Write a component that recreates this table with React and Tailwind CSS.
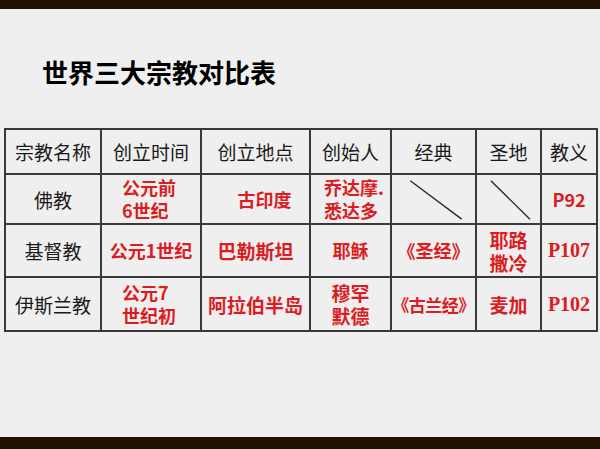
import React from 'react';

const red = 'text-[#dc1c22] font-bold';

function Slash() {
  return (
    <svg className="absolute inset-0 w-full h-full" viewBox="0 0 100 100" preserveAspectRatio="none">
      <line x1="22" y1="12" x2="84" y2="92" stroke="#2a2a2a" strokeWidth="1.4" vectorEffect="non-scaling-stroke" />
    </svg>
  );
}

export default function App() {
  const cell = 'border-2 border-[#3a3a3a] text-center align-middle leading-[23px] p-0 whitespace-nowrap';
  const serif = { fontFamily: '"Liberation Serif", "Noto Sans CJK SC", serif' };
  return (
    <div
      className="w-[600px] h-[449px] bg-[#efefef] flex flex-col overflow-hidden"
      style={{ fontFamily: '"Noto Sans CJK SC", "Noto Sans", sans-serif' }}
    >
      <div className="h-[9px] bg-[#221000] shrink-0" />
      <div className="flex-1 flex flex-col">
        <h1 className="pl-[42px] pt-[44px] text-[26px] leading-[38px] font-bold text-black">
          世界三大宗教对比表
        </h1>
        <div className="pl-[4px] pt-[37px]">
          <table className="border-collapse text-[19px] text-[#1a1a1a] table-fixed w-[592px]">
            <colgroup>
              <col className="w-[96px]" />
              <col className="w-[100px]" />
              <col className="w-[109px]" />
              <col className="w-[81px]" />
              <col className="w-[85px]" />
              <col className="w-[65px]" />
              <col className="w-[56px]" />
            </colgroup>
            <tbody>
              <tr className="h-[45px]">
                <td className={cell}>宗教名称</td>
                <td className={cell}>创立时间</td>
                <td className={cell}>创立地点</td>
                <td className={cell}>创始人</td>
                <td className={cell}>经典</td>
                <td className={cell}>圣地</td>
                <td className={cell}>教义</td>
              </tr>
              <tr className="h-[50px]">
                <td className={cell}>佛教</td>
                <td className={`${cell} ${red} text-[18px]`}>
                  <div className="text-left pl-[20px]">公元前<br />6世纪</div>
                </td>
                <td className={`${cell} ${red} text-[18px]`}><span className="pl-[18px]">古印度</span></td>
                <td className={`${cell} ${red} text-[18px]`}>
                  <div className="text-left pl-[13px]">乔达摩.<br />悉达多</div>
                </td>
                <td className={`${cell} relative`}><Slash /></td>
                <td className={`${cell} relative`}><Slash /></td>
                <td className={`${cell} ${red} text-[18px]`}>P92</td>
              </tr>
              <tr className="h-[53px]">
                <td className={cell}>基督教</td>
                <td className={`${cell} ${red} text-[18px]`}>公元1世纪</td>
                <td className={`${cell} ${red}`}>巴勒斯坦</td>
                <td className={`${cell} ${red} text-[18px]`}>耶稣</td>
                <td className={`${cell} ${red} text-[18px]`}>《圣经》</td>
                <td className={`${cell} ${red}`}>耶路<br />撒冷</td>
                <td className={`${cell} ${red} text-[20px]`} style={serif}>P107</td>
              </tr>
              <tr className="h-[54px]">
                <td className={cell}>伊斯兰教</td>
                <td className={`${cell} ${red} text-[18px]`}>
                  <div className="text-left pl-[20px]">公元7<br />世纪初</div>
                </td>
                <td className={`${cell} ${red}`}>阿拉伯半岛</td>
                <td className={`${cell} ${red}`}>穆罕<br />默德</td>
                <td className={`${cell} ${red} text-[17px] tracking-[-0.5px]`}>《古兰经》</td>
                <td className={`${cell} ${red}`}>麦加</td>
                <td className={`${cell} ${red} text-[20px]`} style={serif}>P102</td>
              </tr>
            </tbody>
          </table>
        </div>
      </div>
      <div className="h-[12px] bg-[#221000] shrink-0" />
    </div>
  );
}
